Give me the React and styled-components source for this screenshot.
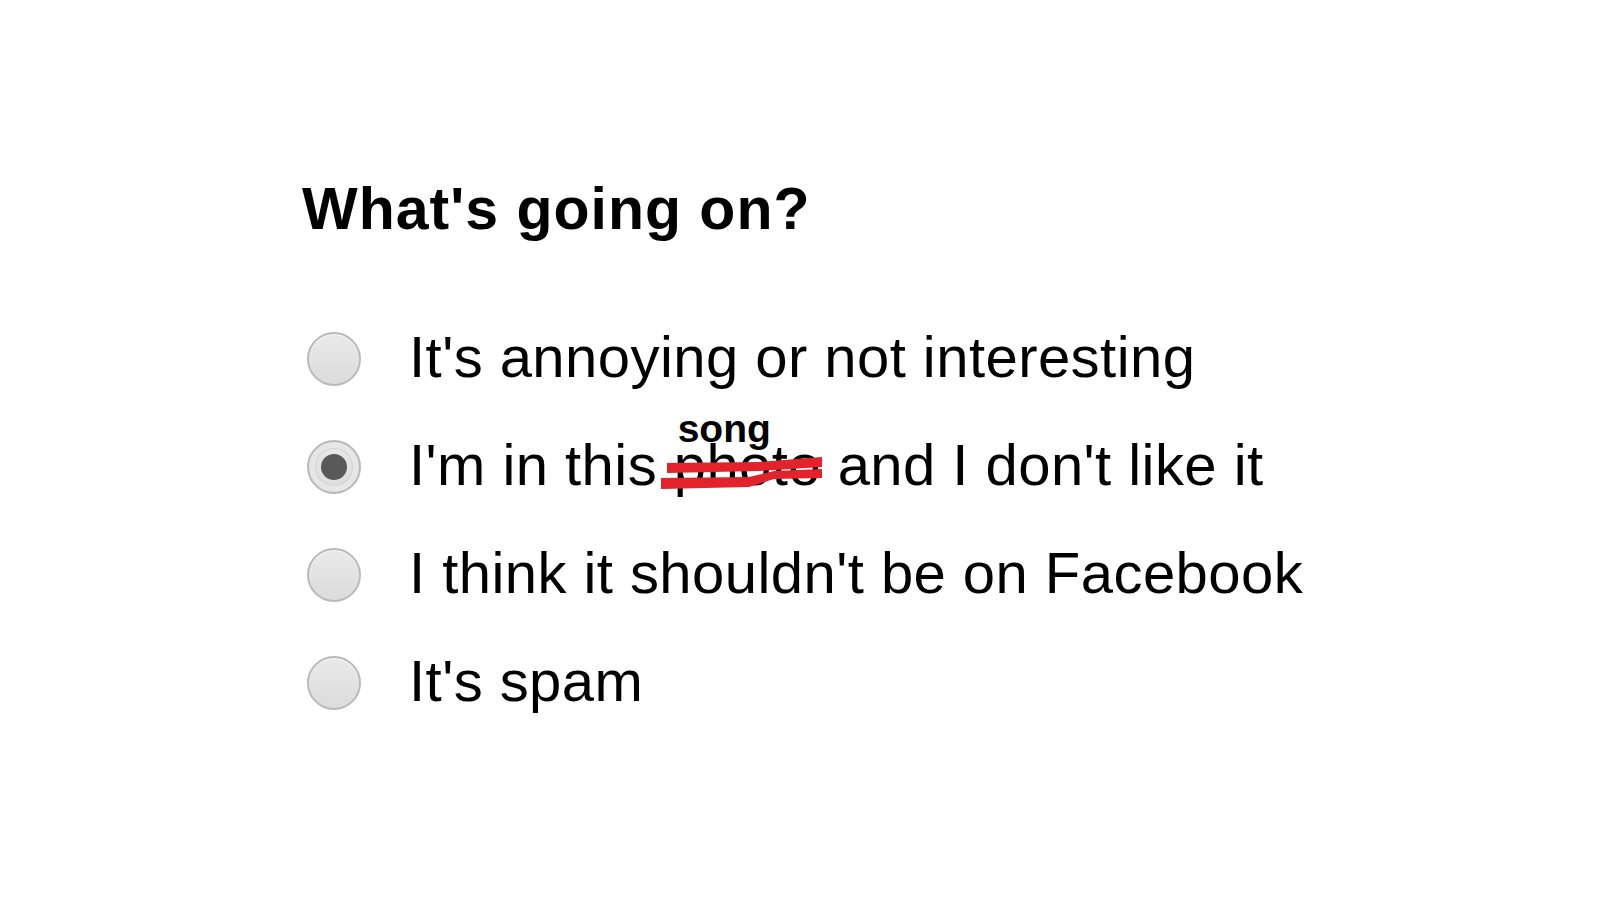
import React from 'react';
import styled, { createGlobalStyle } from 'styled-components';

const GlobalStyle = createGlobalStyle`
  html, body {
    margin: 0;
    padding: 0;
    background: #fff;
  }
  body {
    font-family: "Liberation Sans", Arial, sans-serif;
    color: #000;
  }
`;

const Page = styled.div`
  width: 1600px;
  height: 900px;
  box-sizing: border-box;
  padding: 177px 0 0 302px;
`;

const Title = styled.h1`
  margin: 0;
  font-size: 59px;
  font-weight: bold;
  line-height: 64px;
  letter-spacing: 1px;
`;

const Options = styled.div`
  display: flex;
  flex-direction: column;
  gap: 32px;
  margin-top: 78px;
`;

const Option = styled.label`
  display: flex;
  align-items: center;
  gap: 48px;
  height: 76px;
`;

const Radio = styled.span`
  flex: none;
  width: 54px;
  height: 54px;
  margin: 4px 0 0 5px;
  box-sizing: border-box;
  border-radius: 50%;
  border: 2px solid #b9b9b9;
  background: linear-gradient(#e9e9e9, #dcdcdc);
  box-shadow: ${(p) =>
    p.checked
      ? 'inset 0 0 0 6px #e6e6e6, inset 0 0 0 7px #d2d2d2'
      : 'inset 0 1px 1px rgba(255, 255, 255, 0.7)'};
  display: flex;
  align-items: center;
  justify-content: center;

  &::after {
    content: '';
    display: ${(p) => (p.checked ? 'block' : 'none')};
    width: 26px;
    height: 26px;
    border-radius: 50%;
    background: #595959;
  }
`;

const Label = styled.span`
  font-size: 58px;
  line-height: 76px;
  letter-spacing: 0.45px;
  white-space: nowrap;
`;

const Struck = styled.span`
  position: relative;
  display: inline-block;
`;

const Above = styled.span`
  position: absolute;
  left: 4px;
  top: -11px;
  font-size: 39px;
  font-weight: bold;
  line-height: 26px;
  letter-spacing: 0;
`;

const Scribble = styled.svg`
  position: absolute;
  left: -13px;
  top: 28px;
  width: 162px;
  height: 36px;
  overflow: visible;
`;

const options = [
  { text: "It's annoying or not interesting" },
  { text: null, checked: true },
  { text: "I think it shouldn't be on Facebook" },
  { text: "It's spam" },
];

export default function App() {
  return (
    <>
      <GlobalStyle />
      <Page>
        <Title>What's going on?</Title>
        <Options>
          {options.map((o, i) => (
            <Option key={i}>
              <Radio checked={o.checked} />
              {o.text ? (
                <Label>{o.text}</Label>
              ) : (
                <Label>
                  I'm in this{' '}
                  <Struck>
                    photo
                    <Above>song</Above>
                    <Scribble viewBox="0 0 162 36">
                      <path d="M6 8 L98 7 L161 2 L161 12 L98 16 L6 18 Z" fill="#e3232c" />
                      <path d="M0 23 L88 22 L113 16 L161 14 L161 23 L113 24 L88 32 L0 34 Z" fill="#e3232c" />
                    </Scribble>
                  </Struck>{' '}
                  and I don't like it
                </Label>
              )}
            </Option>
          ))}
        </Options>
      </Page>
    </>
  );
}
